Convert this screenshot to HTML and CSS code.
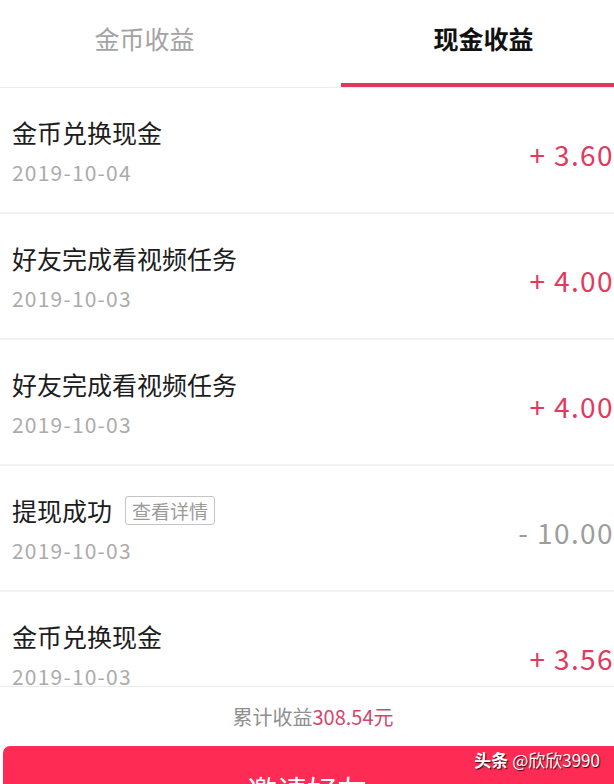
FILE: index.html
```html
<!doctype html>
<html>
  <head>
    <meta charset="utf-8">
    <link rel="stylesheet" href="styles.css">
  </head>
  <body>
    <nav class="tabs">
      <div class="tab tab-coin">金币收益</div>
      <div class="tab tab-cash active">现金收益</div>
    </nav>

    <ul class="records">
      <li class="record">
        <div class="info">
          <div class="title">金币兑换现金</div>
          <div class="date">2019-10-04</div>
        </div>
        <div class="amount plus">+ 3.60</div>
      </li>
      <li class="record">
        <div class="info">
          <div class="title">好友完成看视频任务</div>
          <div class="date">2019-10-03</div>
        </div>
        <div class="amount plus">+ 4.00</div>
      </li>
      <li class="record">
        <div class="info">
          <div class="title">好友完成看视频任务</div>
          <div class="date">2019-10-03</div>
        </div>
        <div class="amount plus">+ 4.00</div>
      </li>
      <li class="record">
        <div class="info">
          <div class="title">提现成功<span class="detail-tag">查看详情</span></div>
          <div class="date">2019-10-03</div>
        </div>
        <div class="amount minus">- 10.00</div>
      </li>
      <li class="record">
        <div class="info">
          <div class="title">金币兑换现金</div>
          <div class="date">2019-10-03</div>
        </div>
        <div class="amount plus">+ 3.56</div>
      </li>
    </ul>

    <footer class="summary">
      <p class="total">累计收益<span class="total-value">308.54元</span></p>
      <button class="invite-btn">邀请好友</button>
    </footer>

    <div class="watermark"><b>头条</b> @欣欣3990</div>
  </body>
</html>
```

FILE: styles.css
```css
/* Reset */
*,
*::before,
*::after {
  box-sizing: border-box;
  margin: 0;
  padding: 0;
}

body {
  font-family: "Noto Sans CJK SC", "Noto Sans", sans-serif;
  color: #222;
  background-color: #fff;
  height: 784px;
  overflow: hidden;
  position: relative;
}

/* Tabs */
.tabs {
  display: flex;
  height: 88px;
  border-bottom: 1px solid #eee;
}

.tab {
  height: 87px;
  padding-top: 20px;
  font-size: 25px;
  line-height: 36px;
  text-align: center;
  color: #a3a3a3;
}

.tab-coin {
  width: 341px;
  padding-right: 52px;
}

.tab-cash {
  flex: 1;
  padding-left: 12px;
}

.tab.active {
  color: #111;
  font-weight: bold;
  border-bottom: 4px solid #e0375c;
}

/* Records */
.records {
  list-style: none;
  height: 598px;
  overflow: hidden;
}

.record {
  display: flex;
  align-items: center;
  justify-content: space-between;
  height: 126px;
  padding: 0 0 0 12px;
  border-bottom: 2px solid #f1f1f1;
}

.info {
  display: flex;
  flex-direction: column;
}

.title {
  display: flex;
  align-items: center;
  font-size: 25px;
  line-height: 32px;
  color: #1c1c1c;
}

.detail-tag {
  margin-left: 13px;
  padding: 0 6px;
  font-size: 19px;
  line-height: 27px;
  color: #9a9a9a;
  border: 1px solid #c4c4c4;
  border-radius: 3px;
}

.date {
  margin-top: 12px;
  font-size: 21px;
  line-height: 24px;
  letter-spacing: 1.2px;
  color: #ababab;
}

.amount {
  padding-top: 8px;
  font-size: 28px;
  letter-spacing: 1.4px;
  white-space: nowrap;
}

.amount.plus {
  color: #e23a5e;
}

.amount.minus {
  color: #9d9d9d;
}

/* Footer */
.summary {
  border-top: 1px solid #ececec;
  padding-top: 16px;
}

.total {
  font-size: 20px;
  line-height: 28px;
  text-align: center;
  padding-left: 12px;
  color: #8f8f8f;
}

.total-value {
  color: #d8456a;
}

.invite-btn {
  display: block;
  width: 620px;
  height: 80px;
  margin: 15px 0 0 3px;
  padding: 6px 12px 0 0;
  font-family: inherit;
  font-size: 30px;
  line-height: 40px;
  color: #fff;
  background-color: #fe2c55;
  border: none;
  border-radius: 7px;
  text-align: center;
}

.watermark {
  position: absolute;
  right: 14px;
  top: 748px;
  font-size: 17px;
  line-height: 24px;
  color: #fff;
  text-shadow: 1px 1px 1px rgba(0, 0, 0, 0.8);
}
```
